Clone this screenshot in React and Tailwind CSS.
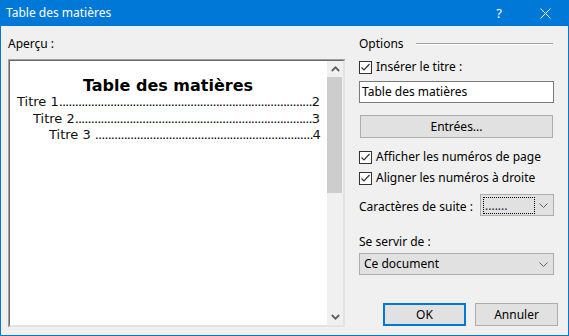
import React from "react";

const Check = () => (
  <span className="w-[13px] h-[13px] border border-[#333333] bg-white flex items-center justify-center shrink-0">
    <svg width="11" height="11" viewBox="0 0 11 11">
      <polyline points="1.5,5.5 4,8 9.5,2" fill="none" stroke="#333333" strokeWidth="1.2" />
    </svg>
  </span>
);

const Chevron = ({ color = "#606060", w = 9, h = 5, sw = 1 }) => (
  <svg width={w} height={h} viewBox={`0 0 ${w} ${h}`}>
    <polyline points={`0.5,0.5 ${w / 2},${h - 0.5} ${w - 0.5},0.5`} fill="none" stroke={color} strokeWidth={sw} />
  </svg>
);

const Entry = ({ label, num, indent, dots }) => (
  <div className={`flex items-baseline min-w-0 h-[16.5px] leading-[16.5px] ${indent}`}>
    <span className="whitespace-pre shrink-0">{label}</span>
    <span className="whitespace-nowrap tracking-[-0.93px] text-black">{".".repeat(dots)}</span>
    <span className="ml-auto shrink-0">{num}</span>
  </div>
);

export default function App() {
  return (
    <div className="w-[569px] h-[336px] bg-[#0078d7] flex flex-col px-px pb-px font-['Noto_Sans',sans-serif] text-[12px] text-black overflow-hidden">
      <div className="h-[26px] shrink-0 flex items-center text-white pl-[5px]">
        <span className="leading-[16px]">Table des matières</span>
        <span className="ml-auto w-[46px] text-center text-[13px] leading-[16px]">?</span>
        <span className="w-[46px] flex justify-center">
          <svg width="11" height="11" viewBox="0 0 11 11">
            <path d="M0.5 0.5 L10.5 10.5 M10.5 0.5 L0.5 10.5" stroke="white" strokeWidth="1" />
          </svg>
        </span>
      </div>
      <div className="flex-1 bg-[#f0f0f0] flex">
        <div className="pl-[7px] pt-[10px] flex flex-col w-[344px] shrink-0">
          <div className="h-[16px] leading-[16px]">Aperçu :</div>
          <div className="mt-[7px] w-[337px] h-[268px] border-t border-l border-[#a0a0a0] flex">
            <div className="flex-1 min-w-0 border-t border-l border-[#696969] border-r-2 border-b-2 border-r-[#e3e3e3] border-b-[#e3e3e3] bg-white flex">
              <div className="flex-1 min-w-0 pt-[16px] pl-[7px] pr-[8px] font-['DejaVu_Sans',sans-serif] text-[13px] text-[#111]">
                <div className="text-center font-bold text-[16px] leading-[17px] text-black">Table des matières</div>
                <Entry label="Titre 1" num="2" indent="" dots={79} />
                <Entry label="Titre 2" num="3" indent="pl-[16px]" dots={74} />
                <Entry label="Titre 3 " num="4" indent="pl-[32px]" dots={68} />
              </div>
              <div className="w-[16px] shrink-0 bg-[#f0f0f0] flex flex-col items-stretch">
                <div className="h-[16px] flex items-center justify-center">
                  <svg width="9" height="6" viewBox="0 0 9 6">
                    <polyline points="0.8,5 4.5,1.3 8.2,5" fill="none" stroke="#606060" strokeWidth="1.8" />
                  </svg>
                </div>
                <div className="h-[116px] bg-[#cdcdcd] mr-px"></div>
                <div className="flex-1"></div>
                <div className="h-[16px] flex items-center justify-center">
                  <svg width="9" height="6" viewBox="0 0 9 6">
                    <polyline points="0.8,1 4.5,4.7 8.2,1" fill="none" stroke="#606060" strokeWidth="1.8" />
                  </svg>
                </div>
              </div>
            </div>
          </div>
        </div>
        <div className="ml-[14px] w-[195px] shrink-0 pt-[10px] flex flex-col">
          <div className="h-[16px] flex items-center">
            <span className="leading-[16px]">Options</span>
            <div className="ml-[12px] w-[137px] h-[2px] border-t border-[#a0a0a0] border-b border-b-white"></div>
          </div>
          <label className="mt-[7px] h-[16px] flex items-center gap-[4px]">
            <Check />
            <span className="leading-[16px]">Insérer le titre :</span>
          </label>
          <div className="mt-[6px] h-[22px] border border-[#7a7a7a] bg-white flex items-center px-[2px] leading-[16px]">
            Table des matières
          </div>
          <div className="mt-[12px] ml-px w-[193px] h-[23px] border border-[#adadad] bg-[#e1e1e1] flex items-center justify-center leading-[16px]">
            Entrées...
          </div>
          <label className="mt-[11px] h-[16px] flex items-center gap-[4px]">
            <Check />
            <span className="leading-[16px]">Afficher les numéros de page</span>
          </label>
          <label className="mt-[5px] h-[16px] flex items-center gap-[4px]">
            <Check />
            <span className="leading-[16px]">Aligner les numéros à droite</span>
          </label>
          <div className="mt-[8px] h-[22px] flex items-center">
            <span className="leading-[16px] mt-[3px]">Caractères de suite :</span>
            <div className="ml-auto w-[74px] h-[22px] border border-[#adadad] bg-[#e1e1e1] flex items-center pl-[2px] pr-[5px]">
              <div className="w-[52px] h-[17px] border border-dotted border-black flex items-end pl-[1px] text-[12px] leading-[14px] text-[#202040]">
                .......
              </div>
              <span className="ml-auto">
                <Chevron />
              </span>
            </div>
          </div>
          <div className="mt-[18px] h-[16px] leading-[16px]">Se servir de :</div>
          <div className="mt-[3px] h-[22px] border border-[#adadad] bg-[#e1e1e1] flex items-center pl-[4px] pr-[5px]">
            <span className="leading-[16px]">Ce document</span>
            <span className="ml-auto">
              <Chevron />
            </span>
          </div>
          <div className="mt-[28px] mr-[-4px] flex justify-end gap-[9px]">
            <div className="w-[83px] h-[23px] border-2 border-[#0078d7] bg-[#e1e1e1] flex items-center justify-center leading-[16px]">
              OK
            </div>
            <div className="w-[83px] h-[23px] border border-[#adadad] bg-[#e1e1e1] flex items-center justify-center leading-[16px]">
              Annuler
            </div>
          </div>
        </div>
      </div>
    </div>
  );
}
